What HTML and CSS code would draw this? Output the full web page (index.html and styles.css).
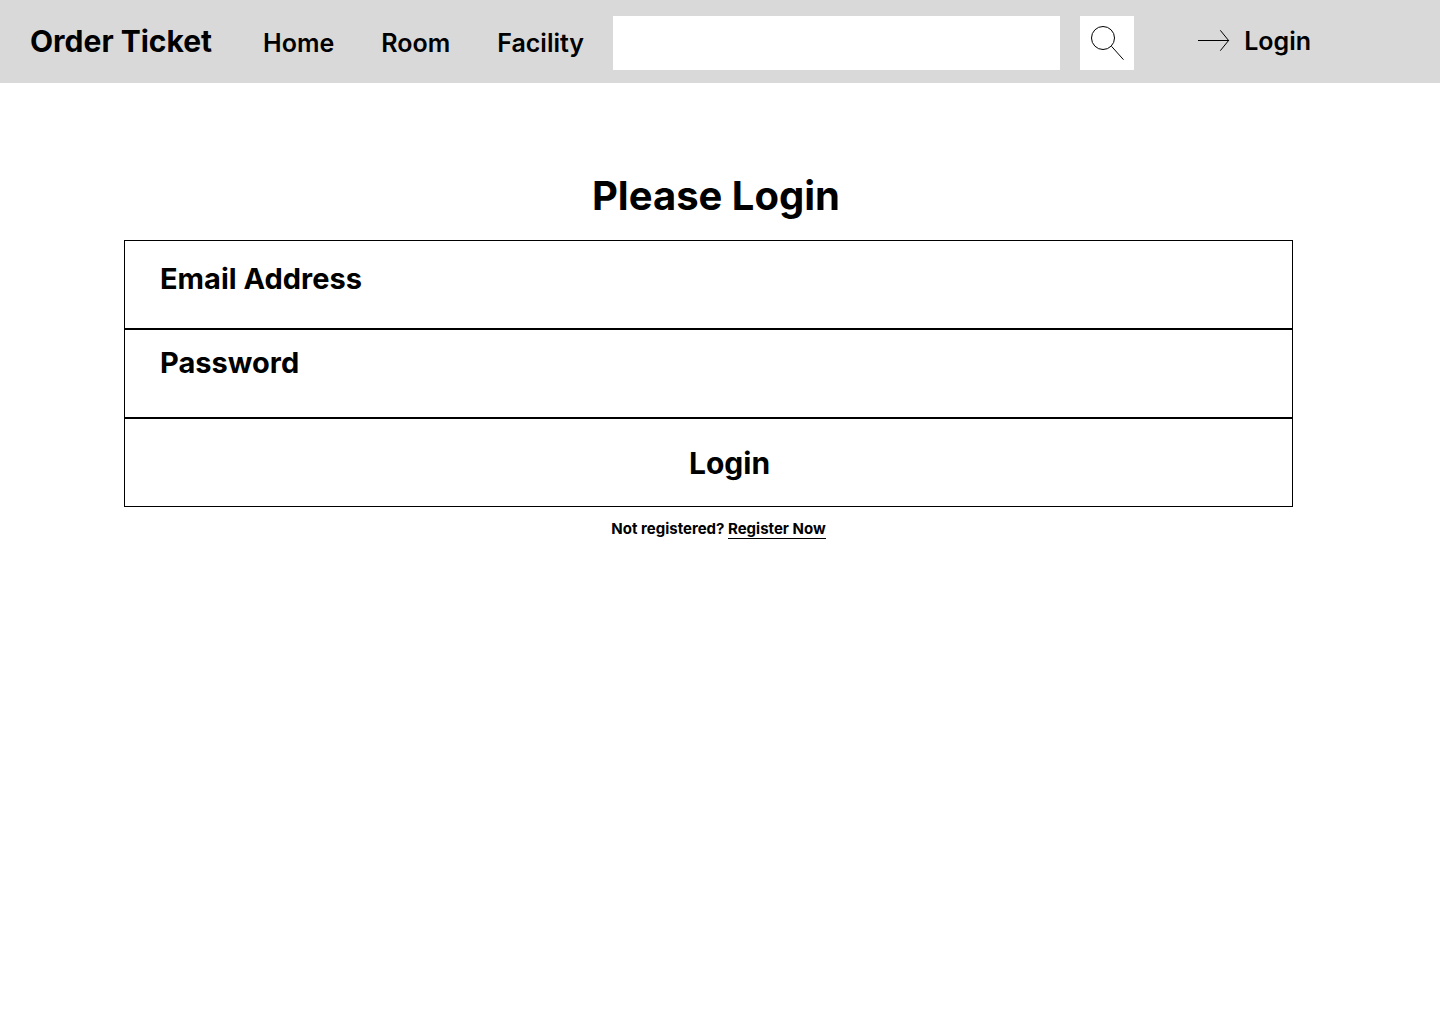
FILE: index.html
```html
<!DOCTYPE html>
<html lang="en">
<head>
<meta charset="utf-8">
<meta name="viewport" content="width=device-width, initial-scale=1">
<title>Order Ticket - Login</title>
<link rel="stylesheet" href="styles.css">
</head>
<body>
<header class="header">
  <a class="brand" href="#">Order Ticket</a>
  <nav class="nav" aria-label="Main">
    <a href="#">Home</a>
    <a href="#">Room</a>
    <a href="#">Facility</a>
  </nav>
  <form class="search" role="search">
    <input class="search-input" type="search" aria-label="Search">
    <button class="search-button" type="submit" aria-label="Search">
      <svg width="54" height="54" viewBox="0 0 54 54" fill="none" stroke="#000" aria-hidden="true">
        <ellipse cx="23" cy="22" rx="11.5" ry="11.5"/>
        <path d="M31.5 30.3L43.5 43.7"/>
      </svg>
    </button>
  </form>
  <a class="login-link" href="#">
    <svg width="32" height="22" viewBox="0 0 32 22" fill="none" stroke="#000" aria-hidden="true">
      <path d="M0 10.5H31M22.3 0.3L30.6 10.5L22.3 20.7"/>
    </svg>
    <span>Login</span>
  </a>
</header>
<main class="main">
  <h1 class="title">Please Login</h1>
  <form class="login-form">
    <input class="field" type="email" placeholder="Email Address" aria-label="Email Address">
    <input class="field field-password" type="password" placeholder="Password" aria-label="Password">
    <button class="submit" type="submit">Login</button>
  </form>
  <p class="register">Not registered? <a href="#">Register Now</a></p>
</main>
</body>
</html>
```

FILE: styles.css
```css
* {
  box-sizing: border-box;
}

body {
  margin: 0;
  background: #fff;
  color: #000;
  font-family: Inter, "Liberation Sans", sans-serif;
}

a {
  color: inherit;
  text-decoration: none;
}

input,
button {
  margin: 0;
  border: 0;
  border-radius: 0;
  background: #fff;
  color: #000;
  font-family: inherit;
}

svg {
  display: block;
}

.header {
  display: flex;
  align-items: center;
  padding: 16px 129px 13px 30px;
  background: #d9d9d9;
}

.brand {
  margin-right: 51px;
  padding-bottom: 4px;
  font-size: 30px;
  font-weight: 700;
  line-height: 36px;
  white-space: nowrap;
}

.nav {
  display: flex;
  gap: 47px;
  margin-right: 29px;
  font-size: 25px;
  font-weight: 600;
  line-height: 30px;
}

.search {
  display: flex;
  flex: 1;
  gap: 20px;
  min-width: 0;
}

.search-input {
  flex: 1;
  min-width: 0;
  height: 54px;
  padding: 0 16px;
  font-size: 25px;
  appearance: none;
}

.search-button {
  flex: none;
  padding: 0;
}

.login-link {
  display: flex;
  align-items: center;
  gap: 14px;
  margin-left: 64px;
  padding-bottom: 4px;
  font-size: 25px;
  font-weight: 600;
  line-height: 30px;
}

.main {
  padding: 88px 147px 0 124px;
}

.title {
  margin: 0 0 20px;
  padding-left: 15px;
  font-size: 40px;
  font-weight: 700;
  line-height: 49px;
  text-align: center;
}

.login-form {
  display: flex;
  flex-direction: column;
}

.field,
.submit {
  width: 100%;
  height: 89px;
  border: 1px solid #000;
  font-size: 30px;
  font-weight: 700;
}

.field {
  padding: 0 35px 12px;
  font-size: 29px;
}

.field-password {
  padding-bottom: 22px;
}

.field::placeholder {
  color: #000;
  opacity: 1;
}

.submit {
  padding: 0 0 0 42px;
}

.register {
  margin: 13px 0 0;
  padding-left: 20px;
  font-size: 15px;
  font-weight: 700;
  line-height: 18px;
  text-align: center;
}

.register a {
  display: inline-block;
  border-bottom: 1px solid #000;
}
```
